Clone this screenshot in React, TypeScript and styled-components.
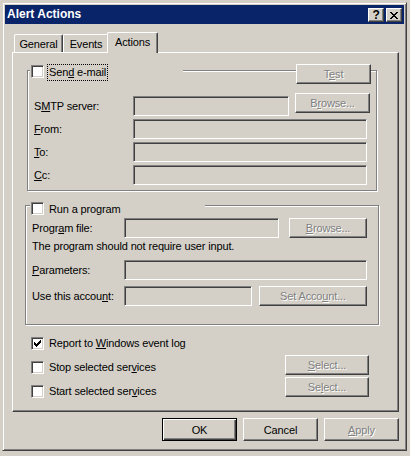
import React from 'react';
import styled, { createGlobalStyle, css } from 'styled-components';

const face = '#d4d0c8';
const shadow = '#808080';
const dark = '#404040';
const caption = '#0a246a';

const GlobalStyle = createGlobalStyle`
  html, body {
    margin: 0;
    padding: 0;
    background: ${face};
  }
  body {
    font-family: "Liberation Sans", Arial, sans-serif;
    font-size: 11px;
    letter-spacing: -0.15px;
    color: #000;
  }
  * {
    box-sizing: border-box;
  }
`;

const CLOSE_X = [
  '##....##',
  '.##..##.',
  '..####..',
  '...##...',
  '..####..',
  '.##..##.',
  '##....##',
];

const CHECK = [
  '......#',
  '.....##',
  '#...###',
  '##.###.',
  '#####..',
  '.###...',
  '..#....',
];

const Pixels: React.FC<{ rows: string[] }> = ({ rows }) => (
  <PixelSvg
    width={rows[0].length}
    height={rows.length}
    shapeRendering="crispEdges"
  >
    {rows.flatMap((row, y) =>
      row
        .split('')
        .map((c, x) =>
          c === '#' ? (
            <rect key={`${x}-${y}`} x={x} y={y} width={1} height={1} fill="#000" />
          ) : null
        )
    )}
  </PixelSvg>
);

const Checkbox: React.FC<{ checked?: boolean }> = ({ checked }) => (
  <CheckSquare>{checked && <Pixels rows={CHECK} />}</CheckSquare>
);

export default function App() {
  return (
    <>
      <GlobalStyle />
      <Window>
        <TitleBar>
          <TitleText>Alert Actions</TitleText>
          <TitleButtons>
            <CaptionButton>?</CaptionButton>
            <CaptionButton>
              <Pixels rows={CLOSE_X} />
            </CaptionButton>
          </TitleButtons>
        </TitleBar>

        <TabStrip>
          <Tab $w={49}>General</Tab>
          <Tab $w={46}>Events</Tab>
          <Tab $w={51} $active>
            Actions
          </Tab>
        </TabStrip>

        <Panel>
          <MailGroup>
            <GroupHeader $mt={-7} $pl={2}>
              <LegendCheck $w={153}>
                <Checkbox />
                <CheckText $focused>
                  Sen<u>d</u> e-mail
                </CheckText>
              </LegendCheck>
              <HeaderButton $w={75} disabled>
                T<u>e</u>st
              </HeaderButton>
            </GroupHeader>

            <FieldRow $mt={9}>
              <FieldLabel $w={99}>
                S<u>M</u>TP server:
              </FieldLabel>
              <TextBox $w={156} />
              <LiftedButton $w={75} $ml={6} disabled>
                B<u>r</u>owse...
              </LiftedButton>
            </FieldRow>
            <FieldRow $mt={3}>
              <FieldLabel $w={99}>
                <u>F</u>rom:
              </FieldLabel>
              <TextBox $w={234} />
            </FieldRow>
            <FieldRow $mt={3}>
              <FieldLabel $w={99}>
                <u>T</u>o:
              </FieldLabel>
              <TextBox $w={234} />
            </FieldRow>
            <FieldRow $mt={3}>
              <FieldLabel $w={99}>
                <u>C</u>c:
              </FieldLabel>
              <TextBox $w={234} />
            </FieldRow>
          </MailGroup>

          <ProgramGroup>
            <GroupHeader $mt={-5} $pl={4}>
              <LegendCheck $w={175}>
                <Checkbox />
                <CheckText>Run a program</CheckText>
              </LegendCheck>
            </GroupHeader>

            <FieldRow $mt={0}>
              <FieldLabel $w={92}>
                Progr<u>a</u>m file:
              </FieldLabel>
              <TextBox $w={155} />
              <Button $w={78} $ml={10} disabled>
                <u>B</u>rowse...
              </Button>
            </FieldRow>
            <Note>The program should not require user input.</Note>
            <FieldRow $mt={7}>
              <FieldLabel $w={92}>
                <u>P</u>arameters:
              </FieldLabel>
              <TextBox $w={243} />
            </FieldRow>
            <FieldRow $mt={6}>
              <FieldLabel $w={92}>
                Use this accou<u>n</u>t:
              </FieldLabel>
              <TextBox $w={128} />
              <Button $w={108} $ml={7} disabled>
                Set Acco<u>u</u>nt...
              </Button>
            </FieldRow>
          </ProgramGroup>

          <ServiceArea>
            <CheckList>
              <CheckRow>
                <Checkbox checked />
                <CheckText>
                  Report to <u>W</u>indows event log
                </CheckText>
              </CheckRow>
              <CheckRow>
                <Checkbox />
                <CheckText>
                  Stop selected ser<u>v</u>ices
                </CheckText>
              </CheckRow>
              <CheckRow>
                <Checkbox />
                <CheckText>
                  Start selected ser<u>v</u>ices
                </CheckText>
              </CheckRow>
            </CheckList>
            <SelectStack>
              <Button $w={84} disabled>
                <u>S</u>elect...
              </Button>
              <Button $w={84} disabled>
                Se<u>l</u>ect...
              </Button>
            </SelectStack>
          </ServiceArea>
        </Panel>

        <DialogButtons>
          <Button $w={75} $h={23} $default>
            OK
          </Button>
          <Button $w={75} $h={23}>
            Cancel
          </Button>
          <Button $w={75} $h={23} disabled>
            <u>A</u>pply
          </Button>
        </DialogButtons>
      </Window>
    </>
  );
}

const PixelSvg = styled.svg`
  display: block;
`;

const Window = styled.div`
  width: 405px;
  height: 449px;
  margin: 2px 0 0 2px;
  padding: 2px;
  background: ${face};
  border: 1px solid;
  border-color: ${face} ${dark} ${dark} ${face};
  box-shadow: inset 1px 1px #fff, inset -1px -1px ${shadow};
  display: flex;
  flex-direction: column;
`;

const TitleBar = styled.div`
  height: 19px;
  display: flex;
  align-items: flex-start;
  padding: 0 2px;
  background: ${caption};
  color: #fff;
`;

const TitleText = styled.span`
  font-size: 12px;
  font-weight: 700;
  line-height: 19px;
  letter-spacing: 0;
`;

const TitleButtons = styled.div`
  display: flex;
  gap: 2px;
  margin-left: auto;
  padding-top: 3px;
`;

const raised = css`
  background: ${face};
  border: 1px solid;
  border-color: #fff ${dark} ${dark} #fff;
  box-shadow: inset -1px -1px ${shadow};
`;

const CaptionButton = styled.div`
  ${raised};
  width: 16px;
  height: 14px;
  display: flex;
  align-items: center;
  justify-content: center;
  color: #000;
  font-size: 12px;
  font-weight: 700;
  line-height: 12px;
`;

const TabStrip = styled.div`
  display: flex;
  align-items: flex-end;
  padding: 8px 0 0 9px;
`;

const Tab = styled.div<{ $w: number; $active?: boolean }>`
  width: ${(p) => p.$w}px;
  height: 18px;
  display: flex;
  align-items: center;
  justify-content: center;
  background: ${face};
  border-top: 1px solid #fff;
  border-left: 1px solid #fff;
  border-right: 1px solid ${dark};
  border-radius: 2px 2px 0 0;
  box-shadow: inset -1px 0 ${shadow};
  ${(p) =>
    p.$active &&
    css`
      position: relative;
      z-index: 1;
      height: 21px;
      margin: 0 -2px -1px;
      padding-bottom: 2px;
    `}
`;

const Panel = styled.div`
  margin-left: 7px;
  width: 387px;
  height: 360px;
  border: 1px solid;
  border-color: #fff ${dark} ${dark} #fff;
  box-shadow: inset -1px -1px ${shadow};
  display: flex;
  flex-direction: column;
`;

const GroupBox = styled.div`
  border: 1px solid ${shadow};
  box-shadow: inset 1px 1px #fff, 1px 1px #fff;
  display: flex;
  flex-direction: column;
`;

const MailGroup = styled(GroupBox)`
  margin: 17px 0 0 14px;
  width: 350px;
  padding-bottom: 5px;
`;

const ProgramGroup = styled(GroupBox)`
  margin: 14px 0 0 12px;
  width: 354px;
  padding-bottom: 18px;
`;

const GroupHeader = styled.div<{ $mt: number; $pl: number }>`
  display: flex;
  align-items: flex-start;
  margin-top: ${(p) => p.$mt}px;
  padding-left: ${(p) => p.$pl}px;
`;

const LegendCheck = styled.label<{ $w: number }>`
  display: flex;
  align-items: flex-start;
  width: ${(p) => p.$w}px;
  height: 17px;
  padding-left: 1px;
  background: ${face};

  & > span:first-child {
    margin-top: 1px;
  }
`;

const sunken = css`
  border: 1px solid;
  border-color: ${shadow} #fff #fff ${shadow};
  box-shadow: inset 1px 1px ${dark}, inset -1px -1px ${face};
`;

const CheckSquare = styled.span`
  ${sunken};
  flex: none;
  width: 13px;
  height: 13px;
  padding: 2px;
  background: #fff;
  display: block;
`;

const CheckText = styled.span<{ $focused?: boolean }>`
  margin-left: 3px;
  padding: 0 1px;
  line-height: 15px;
  border: 1px dotted ${(p) => (p.$focused ? '#000' : 'transparent')};
  white-space: nowrap;
`;

const Button = styled.button<{
  $w: number;
  $h?: number;
  $ml?: number;
  $default?: boolean;
}>`
  ${raised};
  flex: none;
  width: ${(p) => p.$w}px;
  height: ${(p) => p.$h ?? 20}px;
  margin-left: ${(p) => p.$ml ?? 0}px;
  padding: 0;
  font-family: inherit;
  font-size: 11px;
  letter-spacing: inherit;
  color: #000;
  white-space: nowrap;

  &:disabled {
    color: ${shadow};
    text-shadow: 1px 1px #fff;
  }

  ${(p) =>
    p.$default &&
    css`
      border: 1px solid #000;
      box-shadow: inset 1px 1px #fff, inset -1px -1px ${dark},
        inset -2px -2px ${shadow};
    `}
`;

const HeaderButton = styled(Button)`
  margin-left: auto;
  margin-right: 5px;
`;

const LiftedButton = styled(Button)`
  align-self: flex-start;
  margin-bottom: 3px;
`;

const FieldRow = styled.div<{ $mt: number }>`
  display: flex;
  align-items: flex-end;
  margin-top: ${(p) => p.$mt}px;
  padding-left: 6px;
`;

const FieldLabel = styled.span<{ $w: number }>`
  flex: none;
  width: ${(p) => p.$w}px;
  line-height: 20px;
  white-space: nowrap;
`;

const TextBox = styled.div<{ $w: number }>`
  ${sunken};
  flex: none;
  width: ${(p) => p.$w}px;
  height: 20px;
  background: ${face};
`;

const Note = styled.div`
  margin-top: 2px;
  padding-left: 6px;
  line-height: 13px;
  white-space: nowrap;
`;

const ServiceArea = styled.div`
  display: flex;
  justify-content: space-between;
  margin: 10px 29px 0 18px;
`;

const CheckList = styled.div`
  display: flex;
  flex-direction: column;
  gap: 7px;
`;

const CheckRow = styled.label`
  display: flex;
  align-items: center;
  height: 17px;
`;

const SelectStack = styled.div`
  display: flex;
  flex-direction: column;
  gap: 2px;
  margin-top: 20px;
`;

const DialogButtons = styled.div`
  display: flex;
  justify-content: flex-end;
  gap: 6px;
  margin-top: 6px;
  padding-right: 5px;
`;
